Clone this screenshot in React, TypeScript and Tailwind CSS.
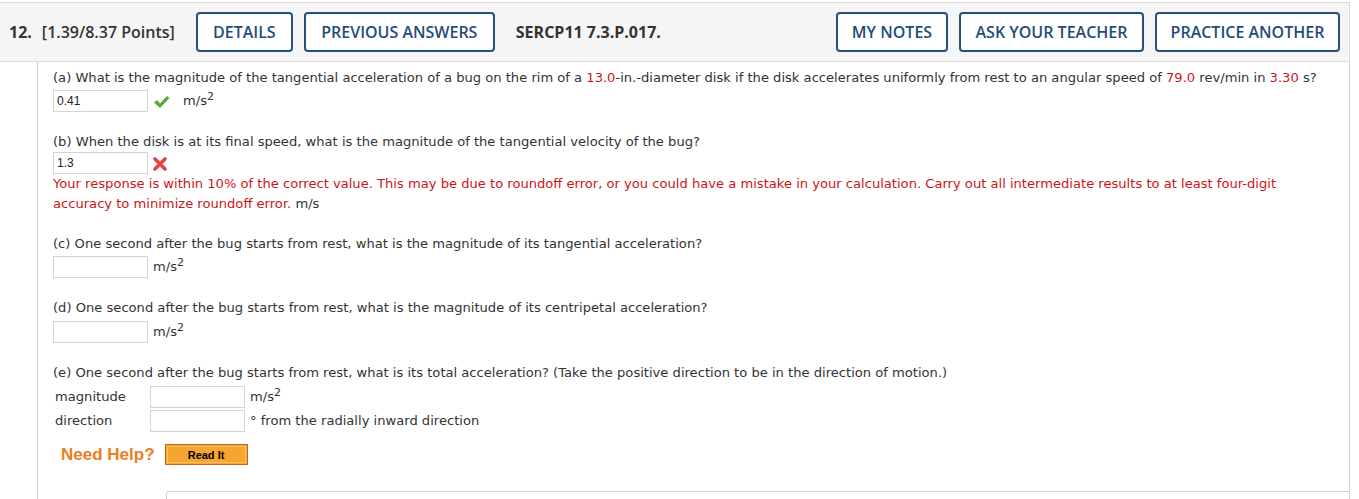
import React from "react";

const HEAD = { fontFamily: '"Open Sans", "Liberation Sans", sans-serif' };
const BODY = { fontFamily: '"DejaVu Sans", Verdana, sans-serif' };
const FIELD = { fontFamily: '"Liberation Sans", Arial, sans-serif' };

function HeadButton({ label, width }: { label: string; width: string }) {
  return (
    <button
      className={`h-[40px] ${width} rounded-[4px] border-2 border-[#24517f] bg-white text-[16px] font-semibold text-[#1f4d7a]`}
      style={HEAD}
    >
      {label}
    </button>
  );
}

function Field({ value = "", className = "" }: { value?: string; className?: string }) {
  return (
    <div
      className={`h-[22px] w-[95px] border border-[#d4d4d4] bg-white pl-[3px] text-[12px] leading-[20px] text-[#222] ${className}`}
      style={FIELD}
    >
      {value}
    </div>
  );
}

function Unit({ sq = true, text = "m/s" }: { sq?: boolean; text?: string }) {
  return (
    <span className="text-[13.1px] text-[#333]" style={BODY}>
      {text}
      {sq && <sup className="relative top-[-0.45em] align-baseline text-[11px]">2</sup>}
    </span>
  );
}

function Check() {
  return (
    <svg width="17" height="14" viewBox="0 0 17 14">
      <path d="M1 7.5 L4 5 L7 8.5 L14 1 L16.5 3 L7 13 Z" fill="#58a83a" />
    </svg>
  );
}

function Cross() {
  return (
    <svg width="14" height="14" viewBox="0 0 14 14">
      <path d="M2 2 L12 12 M12 2 L2 12" stroke="#e6434a" strokeWidth="3.6" strokeLinecap="round" />
    </svg>
  );
}

const Red = ({ children }: { children: React.ReactNode }) => (
  <span className="text-[#cc1517]">{children}</span>
);

export default function App() {
  return (
    <div className="h-[499px] w-[1359px] overflow-hidden bg-white">
      <div className="mt-[2px] flex h-[60px] w-[1350px] items-center border-t border-r border-b border-[#dcdcdc] bg-[#f5f5f5] text-[#333]" style={HEAD}>
        <span className="ml-[9px] text-[16px] font-bold">12.</span>
        <span className="ml-[10px] text-[16px] font-semibold">[1.39/8.37 Points]</span>
        <div className="ml-[21px] flex gap-[11px]">
          <HeadButton label="DETAILS" width="w-[97px]" />
          <HeadButton label="PREVIOUS ANSWERS" width="w-[191px]" />
        </div>
        <span className="ml-[21px] text-[16px] font-bold text-[#333]">SERCP11 7.3.P.017.</span>
        <div className="ml-auto mr-[9px] flex gap-[11px]">
          <HeadButton label="MY NOTES" width="w-[112px]" />
          <HeadButton label="ASK YOUR TEACHER" width="w-[185px]" />
          <HeadButton label="PRACTICE ANOTHER" width="w-[185px]" />
        </div>
      </div>

      <div className="ml-[37px] h-[440px] w-[1313px] border-l border-r border-[#d4d4d4] pl-[15px] pt-[6px] text-[13.1px] leading-[20px] text-[#333]" style={BODY}>
        {/* (a) */}
        <div>
          (a) What is the magnitude of the tangential acceleration of a bug on the rim of a <Red>13.0</Red>-in.-diameter disk if the disk accelerates uniformly from rest to an angular speed of <Red>79.0</Red> rev/min in <Red>3.30</Red> s?
        </div>
        <div className="mt-[2px] flex h-[22px] items-center">
          <Field value="0.41" />
          <span className="ml-[5px] mt-[2px]"><Check /></span>
          <span className="ml-[13px]"><Unit /></span>
        </div>

        {/* (b) */}
        <div className="mt-[20px]">
          (b) When the disk is at its final speed, what is the magnitude of the tangential velocity of the bug?
        </div>
        <div className="flex h-[22px] items-center">
          <Field value="1.3" />
          <span className="ml-[5px] mt-[2px]"><Cross /></span>
        </div>
        <div className="text-[#cc1517]">
          Your response is within 10% of the correct value. This may be due to roundoff error, or you could have a mistake in your calculation. Carry out all intermediate results to at least four-digit
          <br />
          accuracy to minimize roundoff error. <span className="text-[#333]">m/s</span>
        </div>

        {/* (c) */}
        <div className="mt-[20px]">
          (c) One second after the bug starts from rest, what is the magnitude of its tangential acceleration?
        </div>
        <div className="mt-[2px] flex h-[22px] items-center">
          <Field />
          <span className="ml-[5px]"><Unit /></span>
        </div>

        {/* (d) */}
        <div className="mt-[20px]">
          (d) One second after the bug starts from rest, what is the magnitude of its centripetal acceleration?
        </div>
        <div className="mt-[3px] flex h-[22px] items-center">
          <Field />
          <span className="ml-[5px]"><Unit /></span>
        </div>

        {/* (e) */}
        <div className="mt-[20px]">
          (e) One second after the bug starts from rest, what is its total acceleration? (Take the positive direction to be in the direction of motion.)
        </div>
        <div className="mt-[2px] flex h-[23px] items-center">
          <span className="w-[97px] pl-[2px]">magnitude</span>
          <Field />
          <span className="ml-[5px]"><Unit /></span>
        </div>
        <div className="mt-[1px] flex h-[23px] items-center">
          <span className="w-[97px] pl-[2px]">direction</span>
          <Field />
          <span className="ml-[5px]">° from the radially inward direction</span>
        </div>

        <div className="mt-[12px] flex items-center pl-[8px]">
          <span className="text-[17px] font-bold text-[#ee7d22]" style={FIELD}>Need Help?</span>
          <button className="ml-[10px] h-[21px] w-[83px] border border-[#c9651b] bg-[#f7a531] p-[1px]">
            <span className="flex h-full w-full items-center justify-center border border-[#fbc262] text-[11px] font-bold text-black" style={FIELD}>
              Read It
            </span>
          </button>
        </div>

        <div className="ml-[113px] mt-[26px] h-[20px] rounded-tl-[3px] border-t border-l border-[#cfcfcf]" />
      </div>
    </div>
  );
}
